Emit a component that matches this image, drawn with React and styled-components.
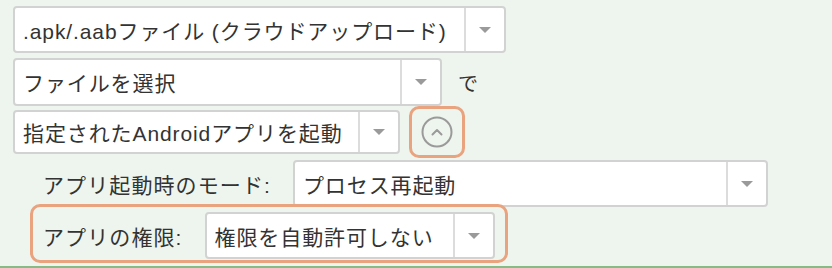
import React from "react";
import styled, { createGlobalStyle } from "styled-components";

const Global = createGlobalStyle`
  html, body { margin: 0; padding: 0; background: #eef5ee; }
  body { font-family: "Liberation Sans", "Noto Sans CJK JP", sans-serif; color: #333; }
`;

const Page = styled.div`
  box-sizing: border-box;
  height: 268px;
  padding: 6px 0 0 13px;
  border-bottom: 2px solid #86bb86;
  display: flex;
  flex-direction: column;
  align-items: flex-start;
`;

const Row = styled.div`
  display: flex;
  align-items: center;
  margin-top: ${(p) => p.$mt || 0}px;
`;

const SelectBox = styled.div`
  box-sizing: border-box;
  width: ${(p) => p.$w}px;
  height: ${(p) => p.$h || 47}px;
  background: #fff;
  border: 2px solid #d2d2d2;
  border-radius: 4px;
  display: flex;
  align-items: stretch;
`;

const SelectText = styled.div`
  flex: 1;
  display: flex;
  align-items: center;
  padding-left: 8px;
  font-size: 21px;
  letter-spacing: 0.9px;
  white-space: nowrap;
  overflow: hidden;
  color: #333;
`;

const ArrowCell = styled.div`
  width: 38px;
  border-left: 2px solid #dcdcdc;
  display: flex;
  align-items: center;
  justify-content: center;
  &::after {
    content: "";
    width: 0;
    height: 0;
    border-left: 6px solid transparent;
    border-right: 6px solid transparent;
    border-top: 6px solid #9a9a9a;
  }
`;

const Suffix = styled.span`
  margin-left: 16px;
  font-size: 20px;
  color: #333;
`;

const Highlight = styled.div`
  box-sizing: border-box;
  border: 3px solid #e9a37f;
  border-radius: 10px;
`;

const ToggleHighlight = styled(Highlight)`
  width: 56px;
  height: 52px;
  margin-left: 9px;
  display: flex;
  align-items: center;
  justify-content: center;
`;

const SubSection = styled.div`
  margin-left: 17px;
  display: flex;
  flex-direction: column;
  align-items: flex-start;
`;

const SubRow = styled.div`
  box-sizing: border-box;
  display: flex;
  align-items: center;
  border: 3px solid ${(p) => (p.$hl ? "#e9a37f" : "transparent")};
  border-radius: 10px;
  padding: ${(p) => (p.$hl ? "5px 10px 1px 10px" : "0 10px")};
  margin-top: ${(p) => p.$mt || 0}px;
`;

const Label = styled.span`
  font-size: 21px;
  letter-spacing: 1.1px;
  color: #333;
  margin-right: ${(p) => p.$mr}px;
  white-space: nowrap;
`;

function Select({ w, h, children }) {
  return (
    <SelectBox $w={w} $h={h}>
      <SelectText>{children}</SelectText>
      <ArrowCell />
    </SelectBox>
  );
}

function CollapseIcon() {
  return (
    <svg width="32" height="32" viewBox="0 0 32 32">
      <circle cx="16" cy="16" r="14.5" fill="none" stroke="#9a9a9a" strokeWidth="2" />
      <path d="M11.5 18.5 L16 14 L20.5 18.5" fill="none" stroke="#9a9a9a" strokeWidth="2" strokeLinecap="round" strokeLinejoin="round" />
    </svg>
  );
}

export default function App() {
  return (
    <>
      <Global />
      <Page>
        <Row>
          <Select w={493} h={47}>.apk/.aabファイル (クラウドアップロード)</Select>
        </Row>
        <Row $mt={5}>
          <Select w={429} h={48}>ファイルを選択</Select>
          <Suffix>で</Suffix>
        </Row>
        <Row>
          <Select w={387} h={44}>指定されたAndroidアプリを起動</Select>
          <ToggleHighlight>
            <CollapseIcon />
          </ToggleHighlight>
        </Row>
        <SubSection>
          <SubRow $mt={-1}>
            <Label $mr={22}>アプリ起動時のモード:</Label>
            <Select w={475} h={47}>プロセス再起動</Select>
          </SubRow>
          <SubRow $hl $mt={-6}>
            <Label $mr={22}>アプリの権限:</Label>
            <Select w={290} h={47}>権限を自動許可しない</Select>
          </SubRow>
        </SubSection>
      </Page>
    </>
  );
}
